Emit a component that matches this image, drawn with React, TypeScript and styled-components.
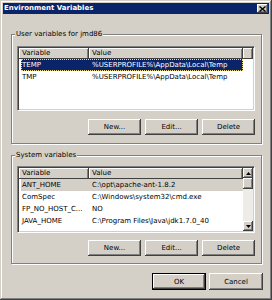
import React from "react"
import styled, { createGlobalStyle } from "styled-components"

const GlobalStyle = createGlobalStyle`
	html, body {
		margin: 0;
		padding: 0;
		background: #d4d0c8;
	}

	body {
		font-family: "DejaVu Sans", Tahoma, sans-serif;
		font-size: 7px;
		color: #000000;
	}
`

const RAISED = "inset -1px -1px #404040, inset 1px 1px #ffffff, inset -2px -2px #808080, inset 2px 2px #d4d0c8"

const WindowElement = styled.div`
	width: 272px;
	height: 300px;
	box-sizing: border-box;
	padding: 3px;
	background: #d4d0c8;
	box-shadow: inset -1px -1px #404040, inset 1px 1px #d4d0c8, inset -2px -2px #808080, inset 2px 2px #ffffff;
	display: flex;
	flex-direction: column;
`

const TitleBarElement = styled.div`
	flex: none;
	height: 11px;
	padding: 0 1px;
	background: #0a246a;
	display: flex;
	flex-direction: row;
	align-items: center;
	justify-content: space-between;
`

const TitleTextElement = styled.span`
	color: #ffffff;
	font-weight: bold;
	line-height: 11px;
	white-space: nowrap;
`

const CloseButtonElement = styled.div`
	width: 11px;
	height: 9px;
	background: #d4d0c8;
	box-shadow: inset -1px -1px #404040, inset 1px 1px #ffffff, inset -2px -2px #808080;
	display: flex;
	align-items: center;
	justify-content: center;
`

const ContentElement = styled.div`
	display: flex;
	flex-direction: column;
	padding: 0 7px 0 8px;
`

const GroupElement = styled.div<{ $top: number, $bottom: number }>`
	margin-top: ${p => p.$top}px;
	padding: 0 6px ${p => p.$bottom}px 5px;
	border: 1px solid #808080;
	box-shadow: inset 1px 1px #ffffff, 1px 1px #ffffff;
	display: flex;
	flex-direction: column;
`

const GroupLabelElement = styled.span`
	align-self: flex-start;
	margin: -5px 0 0 -2px;
	padding: 0 1px;
	height: 9px;
	line-height: 9px;
	background: #d4d0c8;
	white-space: nowrap;
`

const ListBoxElement = styled.div<{ $top: number, $height: number }>`
	margin-top: ${p => p.$top}px;
	height: ${p => p.$height}px;
	box-sizing: border-box;
	padding: 1px;
	background: #ffffff;
	border: 1px solid;
	border-color: #808080 #ffffff #ffffff #808080;
	box-shadow: inset 1px 1px #404040, inset -1px -1px #d4d0c8;
	display: flex;
	flex-direction: row;
	overflow: hidden;
`

const TableElement = styled.div`
	flex: 1;
	display: flex;
	flex-direction: column;
	overflow: hidden;
`

const HeaderRowElement = styled.div`
	flex: none;
	height: 11px;
	display: flex;
	flex-direction: row;
`

const HeaderCellElement = styled.div<{ $width?: number }>`
	${p => p.$width ? `width: ${p.$width}px;` : "flex: 1;"}
	flex-shrink: 0;
	box-sizing: border-box;
	padding-left: 3px;
	line-height: 11px;
	background: #d4d0c8;
	box-shadow: inset -1px -1px #404040, inset 1px 1px #ffffff, inset -2px -1px #808080;
	white-space: nowrap;
	overflow: hidden;
`

type Selection = "none" | "active" | "inactive"

const RowElement = styled.div<{ $selection: Selection }>`
	flex: none;
	width: 222px;
	height: 12px;
	margin-left: 2px;
	box-sizing: border-box;
	display: flex;
	flex-direction: row;
	line-height: 12px;
	white-space: nowrap;
	background: ${p => p.$selection === "active" ? "#0a246a" : p.$selection === "inactive" ? "#d4d0c8" : "transparent"};
	color: ${p => p.$selection === "active" ? "#ffffff" : "#000000"};
	${p => p.$selection === "active" && `
		outline: 1px dotted #f2d98c;
		outline-offset: -1px;
	`}
`

const CellElement = styled.span<{ $width: number, $indent: number }>`
	width: ${p => p.$width}px;
	padding-left: ${p => p.$indent}px;
	box-sizing: border-box;
	overflow: hidden;
`

const ScrollBarElement = styled.div`
	flex: none;
	width: 10px;
	display: flex;
	flex-direction: column;
	background: #eeece8;
`

const ScrollPartElement = styled.div<{ $height: number }>`
	flex: none;
	height: ${p => p.$height}px;
	background: #d4d0c8;
	box-shadow: ${RAISED};
	display: flex;
	align-items: center;
	justify-content: center;
`

const ScrollTrackElement = styled.div`
	flex: 1;
`

const ButtonRowElement = styled.div<{ $top: number, $height: number, $gap: number }>`
	margin-top: ${p => p.$top}px;
	height: ${p => p.$height}px;
	display: flex;
	flex-direction: row;
	justify-content: flex-end;
	gap: ${p => p.$gap}px;
`

const ButtonElement = styled.button<{ $width: number, $default?: boolean }>`
	width: ${p => p.$width}px;
	height: 100%;
	box-sizing: border-box;
	padding: 0;
	margin: 0;
	font: inherit;
	color: #000000;
	background: #d4d0c8;
	border: ${p => p.$default ? "1px solid #000000" : "none"};
	box-shadow: ${RAISED};
`

const FooterElement = styled(ButtonRowElement)`
	padding-right: 6px;
`

type Variable = { name: string, value: string, selection?: Selection }

const userVariables: Variable[] = [
	{ name: "TEMP", value: "%USERPROFILE%\\AppData\\Local\\Temp", selection: "active" },
	{ name: "TMP", value: "%USERPROFILE%\\AppData\\Local\\Temp" },
]

const systemVariables: Variable[] = [
	{ name: "ANT_HOME", value: "C:\\opt\\apache-ant-1.8.2", selection: "inactive" },
	{ name: "ComSpec", value: "C:\\Windows\\system32\\cmd.exe" },
	{ name: "FP_NO_HOST_C...", value: "NO" },
	{ name: "JAVA_HOME", value: "C:\\Program Files\\Java\\jdk1.7.0_40" },
]

function Arrow({ up }: { up: boolean }) {
	return (
		<svg width="5" height="3" viewBox="0 0 5 3">
			<polygon points={up ? "2.5,0 5,3 0,3" : "0,0 5,0 2.5,3"} fill="#000000" />
		</svg>
	)
}

function VariableList({ variables, height, top, scroll }: {
	variables: Variable[],
	height: number,
	top: number,
	scroll?: boolean,
}) {
	return (
		<ListBoxElement $top={top} $height={height}>
			<TableElement>
				<HeaderRowElement>
					<HeaderCellElement $width={70}>Variable</HeaderCellElement>
					<HeaderCellElement $width={154}>Value</HeaderCellElement>
					{scroll ? null : <HeaderCellElement />}
				</HeaderRowElement>
				{variables.map(variable => (
					<RowElement key={variable.name} $selection={variable.selection ?? "none"}>
						<CellElement $width={68} $indent={1}>{variable.name}</CellElement>
						<CellElement $width={154} $indent={3}>{variable.value}</CellElement>
					</RowElement>
				))}
			</TableElement>
			{
				scroll ? (
					<ScrollBarElement>
						<ScrollPartElement $height={10}><Arrow up /></ScrollPartElement>
						<ScrollPartElement $height={11} />
						<ScrollTrackElement />
						<ScrollPartElement $height={10}><Arrow up={false} /></ScrollPartElement>
					</ScrollBarElement>
				) : null
			}
		</ListBoxElement>
	)
}

function EditButtons({ top }: { top: number }) {
	return (
		<ButtonRowElement $top={top} $height={16} $gap={4}>
			<ButtonElement $width={53}>New...</ButtonElement>
			<ButtonElement $width={53}>Edit...</ButtonElement>
			<ButtonElement $width={53}>Delete</ButtonElement>
		</ButtonRowElement>
	)
}

function App() {
	return (
		<>
			<GlobalStyle />
			<WindowElement>
				<TitleBarElement>
					<TitleTextElement>Environment Variables</TitleTextElement>
					<CloseButtonElement>
						<svg width="7" height="6" viewBox="0 0 7 6">
							<path d="M0.5 0.5 L6.5 5.5 M6.5 0.5 L0.5 5.5" stroke="#000000" strokeWidth="1.4" />
						</svg>
					</CloseButtonElement>
				</TitleBarElement>
				<ContentElement>
					<GroupElement $top={20} $bottom={8}>
						<GroupLabelElement>User variables for jmd86</GroupLabelElement>
						<VariableList variables={userVariables} top={7} height={65} />
						<EditButtons top={8} />
					</GroupElement>
					<GroupElement $top={11} $bottom={7}>
						<GroupLabelElement>System variables</GroupLabelElement>
						<VariableList variables={systemVariables} top={6} height={67} scroll />
						<EditButtons top={7} />
					</GroupElement>
				</ContentElement>
				<FooterElement $top={9} $height={17} $gap={3}>
					<ButtonElement $width={54} $default>OK</ButtonElement>
					<ButtonElement $width={54}>Cancel</ButtonElement>
				</FooterElement>
			</WindowElement>
		</>
	)
}

export default App
